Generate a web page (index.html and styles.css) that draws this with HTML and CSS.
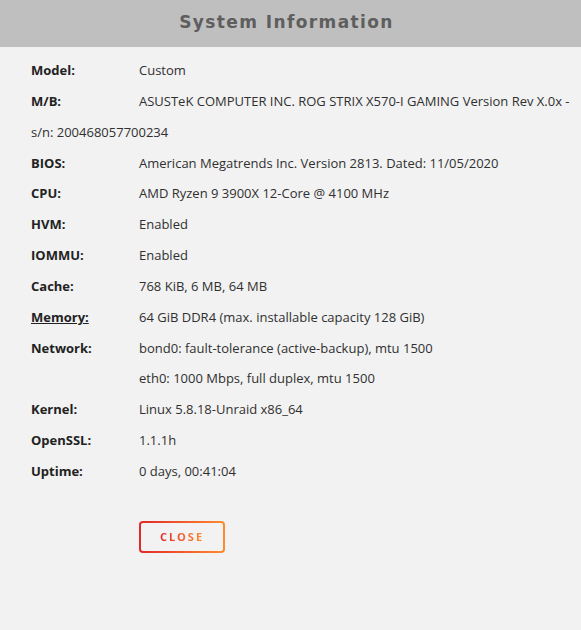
FILE: index.html
```html
<!DOCTYPE html>
<html lang="en">
  <head>
    <meta charset="UTF-8" />
    <title>System Information</title>
    <link rel="stylesheet" href="styles.css">
  </head>
  <body>
    <div class="header">
      <h1>System Information</h1>
    </div>

    <div class="content">
      <div class="row"><span class="label">Model:</span>Custom</div>
      <div class="row"><span class="label">M/B:</span>ASUSTeK COMPUTER INC. ROG STRIX X570-I GAMING Version Rev X.0x - s/n: 200468057700234</div>
      <div class="row"><span class="label">BIOS:</span>American Megatrends Inc. Version 2813. Dated: 11/05/2020</div>
      <div class="row"><span class="label">CPU:</span>AMD Ryzen 9 3900X 12-Core @ 4100 MHz</div>
      <div class="row"><span class="label">HVM:</span>Enabled</div>
      <div class="row"><span class="label">IOMMU:</span>Enabled</div>
      <div class="row"><span class="label">Cache:</span>768 KiB, 6 MB, 64 MB</div>
      <div class="row"><span class="label"><u>Memory:</u></span>64 GiB DDR4 (max. installable capacity 128 GiB)</div>
      <div class="row"><span class="label">Network:</span>bond0: fault-tolerance (active-backup), mtu 1500</div>
      <div class="row"><span class="label"></span>eth0: 1000 Mbps, full duplex, mtu 1500</div>
      <div class="row"><span class="label">Kernel:</span>Linux 5.8.18-Unraid x86_64</div>
      <div class="row"><span class="label">OpenSSL:</span>1.1.1h</div>
      <div class="row"><span class="label">Uptime:</span>0 days, 00:41:04</div>

      <div class="actions">
        <button class="close-btn"><span>Close</span></button>
      </div>
    </div>
  </body>
</html>
```

FILE: styles.css
```css
* {
  box-sizing: border-box;
  margin: 0;
  padding: 0;
}

body {
  font-family: "Open Sans", "Noto Sans", sans-serif;
  background-color: #f2f2f2;
  color: #303030;
  font-size: 13px;
}

.header {
  background-color: #bfbfbf;
  height: 47px;
  display: flex;
  justify-content: center;
  align-items: center;
  padding-bottom: 4px;
}

.header h1 {
  font-family: "DejaVu Sans", sans-serif;
  font-size: 17px;
  font-weight: bold;
  letter-spacing: 1.4px;
  color: #5e5e5e;
  padding-right: 8px;
}

.content {
  padding: 8px 4px 0 31px;
}

.row {
  line-height: 30.85px;
}

.label {
  display: inline-block;
  width: 108px;
  font-weight: bold;
  color: #222;
}

.actions {
  margin-top: 34px;
  padding-left: 108px;
}

.close-btn {
  width: 86px;
  height: 32px;
  border: 2px solid transparent;
  border-radius: 4px;
  background: linear-gradient(#f2f2f2, #f2f2f2) padding-box,
    linear-gradient(90deg, #e22828, #ff8c2f) border-box;
  font-family: "Open Sans", sans-serif;
  font-size: 11px;
  font-weight: bold;
  letter-spacing: 2px;
  text-transform: uppercase;
  cursor: pointer;
}

.close-btn span {
  background: linear-gradient(90deg, #e22828, #ff8c2f);
  -webkit-background-clip: text;
  background-clip: text;
  color: transparent;
}
```
